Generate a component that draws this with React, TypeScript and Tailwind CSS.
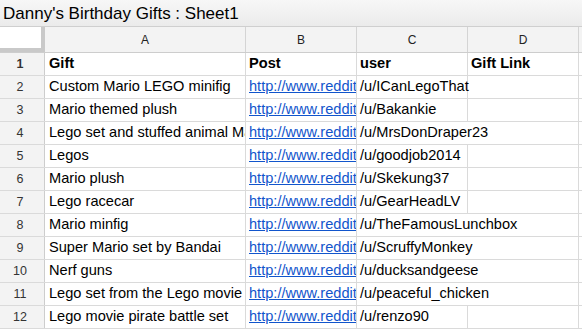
const rows = [
  { gift: 'Custom Mario LEGO minifig', user: '/u/ICanLegoThat', spill: false },
  { gift: 'Mario themed plush', user: '/u/Bakankie', spill: false },
  { gift: 'Lego set and stuffed animal Mario', user: '/u/MrsDonDraper23', spill: true },
  { gift: 'Legos', user: '/u/goodjob2014', spill: false },
  { gift: 'Mario plush', user: '/u/Skekung37', spill: false },
  { gift: 'Lego racecar', user: '/u/GearHeadLV', spill: false },
  { gift: 'Mario minfig', user: '/u/TheFamousLunchbox', spill: true },
  { gift: 'Super Mario set by Bandai', user: '/u/ScruffyMonkey', spill: true },
  { gift: 'Nerf guns', user: '/u/ducksandgeese', spill: true },
  { gift: 'Lego set from the Lego movie', user: '/u/peaceful_chicken', spill: true },
  { gift: 'Lego movie pirate battle set', user: '/u/renzo90', spill: false },
];

const font = { fontFamily: '"Liberation Sans", Arial, Helvetica, sans-serif' };

function RowNum({ n }: { n: number }) {
  return (
    <div className="w-[45px] h-full shrink-0 bg-[#f3f3f3] border-r border-[#cdcdcd] flex items-center justify-center pr-[4px] text-[12.5px] text-[#333]">
      {n}
    </div>
  );
}

export default function App() {
  return (
    <div className="w-[582px] h-[331px] bg-white overflow-hidden text-black" style={font}>
      <div className="h-[27px] bg-gradient-to-b from-[#f7f7f7] to-[#ebebeb] border-b border-[#cfcfcf] flex items-center pl-[3px] text-[17px] leading-none">
        Danny's Birthday Gifts : Sheet1
      </div>

      <div className="h-[26px] flex bg-[#f3f3f3] border-b border-[#cdcdcd] text-[12px] text-[#222]">
        <div className="w-[45px] h-full shrink-0 bg-white border-r-4 border-b-4 border-[#c9c9c9]" />
        <div className="w-[201px] shrink-0 border-r border-[#d4d4d4] flex items-center justify-center">A</div>
        <div className="w-[111px] shrink-0 border-r border-[#d4d4d4] flex items-center justify-center">B</div>
        <div className="w-[111px] shrink-0 border-r border-[#d4d4d4] flex items-center justify-center">C</div>
        <div className="w-[111px] shrink-0 border-r border-[#d4d4d4] flex items-center justify-center">D</div>
      </div>

      <div className="h-[23px] flex border-b border-[#dadada] text-[14.6px] font-bold">
        <RowNum n={1} />
        <div className="w-[201px] shrink-0 border-r border-[#dadada] flex items-center pl-[4px]">Gift</div>
        <div className="w-[111px] shrink-0 border-r border-[#dadada] flex items-center pl-[3px]">Post</div>
        <div className="w-[111px] shrink-0 border-r border-[#dadada] flex items-center pl-[3px]">user</div>
        <div className="w-[111px] shrink-0 border-r border-[#dadada] flex items-center pl-[3px]">Gift Link</div>
      </div>

      {rows.map((r, i) => (
        <div key={i} className="h-[23px] flex border-b border-[#dadada] text-[14.6px]">
          <RowNum n={i + 2} />
          <div className="w-[201px] shrink-0 border-r border-[#dadada] flex items-center pl-[4px] overflow-hidden whitespace-nowrap">
            {r.gift}
          </div>
          <div className="w-[111px] shrink-0 border-r border-[#dadada] flex items-center pl-[3px] overflow-hidden whitespace-nowrap">
            <span className="text-[#1155cc] underline">http://www.reddit.com/r/gifts</span>
          </div>
          <div
            className={
              r.spill
                ? 'w-[111px] shrink-0 border-r border-white flex items-center pl-[3px] whitespace-nowrap relative z-10'
                : 'w-[111px] shrink-0 border-r border-[#dadada] flex items-center pl-[3px] whitespace-nowrap'
            }
          >
            {r.user}
          </div>
          <div className="w-[111px] shrink-0 border-r border-[#dadada]" />
        </div>
      ))}
    </div>
  );
}
